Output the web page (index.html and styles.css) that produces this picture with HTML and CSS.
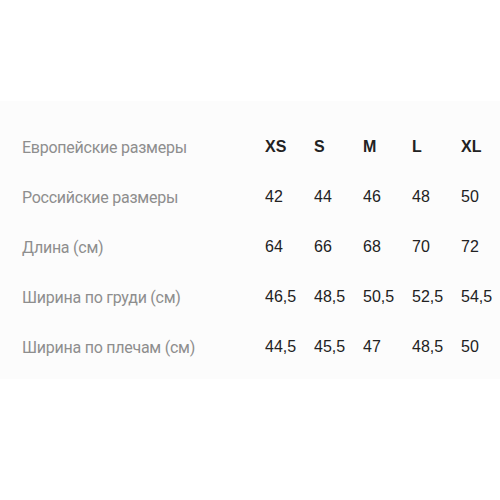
FILE: index.html
```html
<!DOCTYPE html>
<html lang="ru">
<head>
<meta charset="utf-8">
<link rel="stylesheet" href="styles.css">
</head>
<body>
<div class="band">
  <div class="table">
    <div class="row head">
      <div class="label">Европейские размеры</div>
      <div class="val">XS</div><div class="val">S</div><div class="val">M</div><div class="val">L</div><div class="val">XL</div>
    </div>
    <div class="row">
      <div class="label">Российские размеры</div>
      <div class="val">42</div><div class="val">44</div><div class="val">46</div><div class="val">48</div><div class="val">50</div>
    </div>
    <div class="row">
      <div class="label">Длина (см)</div>
      <div class="val">64</div><div class="val">66</div><div class="val">68</div><div class="val">70</div><div class="val">72</div>
    </div>
    <div class="row">
      <div class="label">Ширина по груди (см)</div>
      <div class="val">46,5</div><div class="val">48,5</div><div class="val">50,5</div><div class="val">52,5</div><div class="val">54,5</div>
    </div>
    <div class="row">
      <div class="label">Ширина по плечам (см)</div>
      <div class="val">44,5</div><div class="val">45,5</div><div class="val">47</div><div class="val">48,5</div><div class="val">50</div>
    </div>
  </div>
</div>
</body>
</html>
```
FILE: styles.css
```css
html, body {
  margin: 0;
  padding: 0;
  background: #ffffff;
}
.band {
  margin-top: 101px;
  height: 278px;
  box-sizing: border-box;
  background: #fcfcfc;
  padding: 21px 0 0 22px;
}
.table {
  display: flex;
  flex-direction: column;
}
.row {
  display: grid;
  grid-template-columns: 243px 49px 49px 49px 49px 49px;
  height: 50px;
  align-items: center;
}
.label {
  font-family: Roboto, "Noto Sans", sans-serif;
  font-weight: 400;
  font-size: 16px;
  letter-spacing: -0.25px;
  color: #8e8e8e;
}
.val {
  font-family: "Liberation Sans", Arial, sans-serif;
  font-size: 16px;
  color: #222222;
}
.head .val {
  font-weight: 700;
}
```
